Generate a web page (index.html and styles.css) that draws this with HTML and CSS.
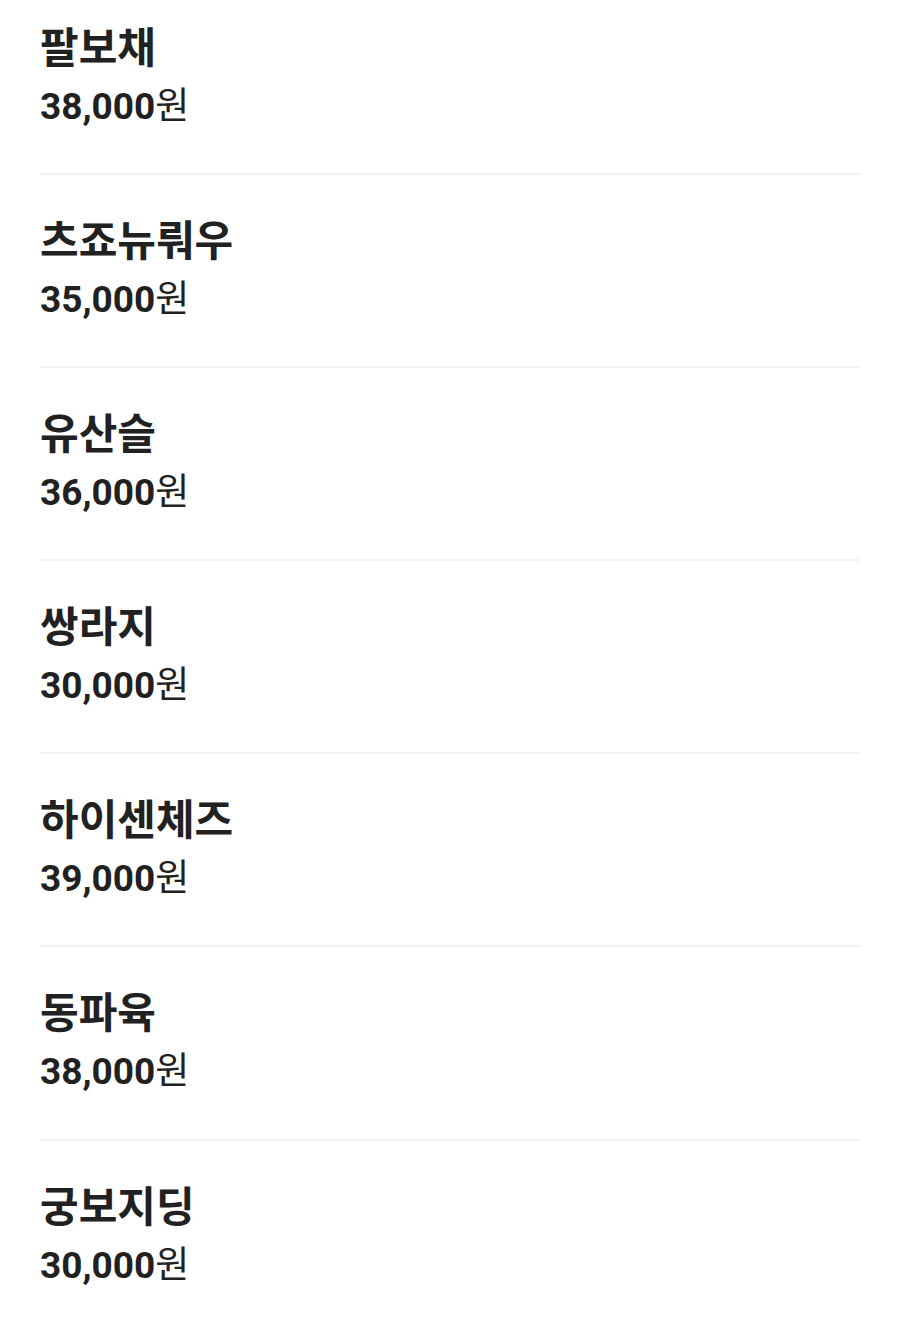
FILE: index.html
```html
<!DOCTYPE html>
<html lang="ko">
<head>
    <meta charset="UTF-8">
    <meta name="viewport" content="width=device-width, initial-scale=1.0">
    <title>메뉴</title>
    <link rel="stylesheet" href="styles.css">
</head>
<body>
    <ul class="menu-list">
        <li class="menu-item">
            <div class="menu-name">팔보채</div>
            <div class="menu-price">38,000<span class="won">원</span></div>
        </li>
        <li class="menu-item">
            <div class="menu-name">츠죠뉴뤄우</div>
            <div class="menu-price">35,000<span class="won">원</span></div>
        </li>
        <li class="menu-item">
            <div class="menu-name">유산슬</div>
            <div class="menu-price">36,000<span class="won">원</span></div>
        </li>
        <li class="menu-item">
            <div class="menu-name">쌍라지</div>
            <div class="menu-price">30,000<span class="won">원</span></div>
        </li>
        <li class="menu-item">
            <div class="menu-name">하이센체즈</div>
            <div class="menu-price">39,000<span class="won">원</span></div>
        </li>
        <li class="menu-item">
            <div class="menu-name">동파육</div>
            <div class="menu-price">38,000<span class="won">원</span></div>
        </li>
        <li class="menu-item">
            <div class="menu-name">궁보지딩</div>
            <div class="menu-price">30,000<span class="won">원</span></div>
        </li>
    </ul>
</body>
</html>
```

FILE: styles.css
```css
body {
    margin: 0;
    padding: 0;
    background: #fff;
    color: #212121;
    font-family: Roboto, 'Noto Sans CJK KR', sans-serif;
}
.menu-list {
    list-style: none;
    margin: 0;
    padding: 0 40px;
}
.menu-item {
    padding: 39px 0 36.1px;
    border-bottom: 2px solid #f3f3f3;
}
.menu-item:first-child {
    padding-top: 21px;
}
.menu-item:last-child {
    border-bottom: none;
}
.menu-name {
    font-size: 42px;
    font-weight: 700;
    line-height: 56px;
}
.menu-price {
    font-size: 37px;
    font-weight: 700;
    line-height: 60px;
}
.won {
    font-weight: 400;
}
```
